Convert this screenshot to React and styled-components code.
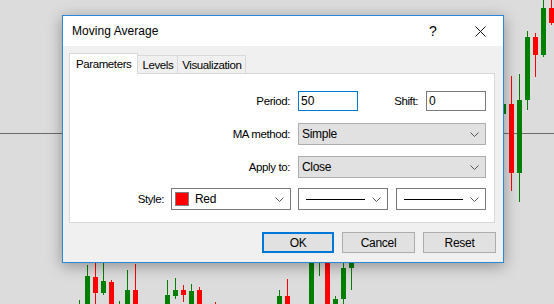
import React from 'react'
import styled, { createGlobalStyle } from 'styled-components'

const GREEN = '#008000'
const RED = '#ff0000'

// x = left edge of body, bt/bb body top/bottom, wt/wb wick top/bottom
const candles = [
  { x: 501, bt: 104, bb: 114, wt: 104, wb: 114, c: GREEN },
  { x: 509, bt: 104, bb: 173, wt: 76, wb: 191, c: RED },
  { x: 517, bt: 100, bb: 173, wt: 74, wb: 202, c: GREEN },
  { x: 525, bt: 37, bb: 100, wt: 31, wb: 110, c: GREEN },
  { x: 533, bt: 37, bb: 55, wt: 33, wb: 77, c: RED },
  { x: 541, bt: 8, bb: 55, wt: 0, wb: 57, c: GREEN },
  { x: 549, bt: 8, bb: 23, wt: 0, wb: 25, c: RED },
  { x: 77, bt: 306, bb: 310, wt: 300, wb: 310, c: GREEN },
  { x: 85, bt: 276, bb: 304, wt: 265, wb: 304, c: GREEN },
  { x: 93, bt: 277, bb: 293, wt: 262, wb: 304, c: RED },
  { x: 101, bt: 281, bb: 293, wt: 262, wb: 295, c: GREEN },
  { x: 109, bt: 282, bb: 304, wt: 280, wb: 304, c: RED },
  { x: 117, bt: 306, bb: 310, wt: 301, wb: 310, c: GREEN },
  { x: 125, bt: 290, bb: 304, wt: 270, wb: 304, c: GREEN },
  { x: 133, bt: 290, bb: 304, wt: 264, wb: 304, c: RED },
  { x: 165, bt: 295, bb: 304, wt: 280, wb: 304, c: GREEN },
  { x: 173, bt: 290, bb: 296, wt: 278, wb: 299, c: GREEN },
  { x: 181, bt: 290, bb: 295, wt: 285, wb: 302, c: RED },
  { x: 189, bt: 291, bb: 304, wt: 284, wb: 304, c: GREEN },
  { x: 197, bt: 290, bb: 304, wt: 287, wb: 304, c: RED },
  { x: 213, bt: 306, bb: 310, wt: 302, wb: 310, c: RED },
  { x: 277, bt: 296, bb: 304, wt: 290, wb: 304, c: GREEN },
  { x: 285, bt: 296, bb: 304, wt: 279, wb: 304, c: RED },
  { x: 309, bt: 240, bb: 304, wt: 240, wb: 304, c: GREEN },
  { x: 317, bt: 240, bb: 250, wt: 240, wb: 276, c: GREEN },
  { x: 325, bt: 240, bb: 304, wt: 240, wb: 304, c: RED },
  { x: 333, bt: 299, bb: 304, wt: 296, wb: 304, c: GREEN },
  { x: 341, bt: 268, bb: 299, wt: 250, wb: 304, c: GREEN },
  { x: 349, bt: 250, bb: 268, wt: 250, wb: 290, c: GREEN },
]

const GlobalStyle = createGlobalStyle`
  html, body {
    margin: 0;
    padding: 0;
    background: #dcdcdc;
  }
  body {
    font-family: "Liberation Sans", Arial, sans-serif;
    color: #000;
  }
`

const Desktop = styled.div`
  position: relative;
  width: 554px;
  height: 304px;
  overflow: hidden;
  background: #dcdcdc;
`

const ChartSvg = styled.svg`
  display: block;
`

const Window = styled.div`
  position: absolute;
  left: 62px;
  top: 15px;
  width: 442px;
  height: 248px;
  box-sizing: border-box;
  border: 1px solid #2b88d8;
  background: #f0f0f0;
  box-shadow: 0 3px 14px rgba(0, 0, 0, 0.35);
  display: flex;
  flex-direction: column;
`

const TitleBar = styled.div`
  height: 30px;
  background: #fff;
  display: flex;
  align-items: center;
  padding-left: 9px;
`

const Title = styled.div`
  flex: 1;
  font-size: 12px;
  letter-spacing: 0.05px;
`

const HelpGlyph = styled.div`
  width: 46px;
  text-align: center;
  font-size: 14px;
  margin-right: 1px;
`

const CloseBox = styled.div`
  width: 46px;
  height: 30px;
  display: flex;
  align-items: center;
  justify-content: center;
`

const Body = styled.div`
  flex: 1;
  display: flex;
  flex-direction: column;
  padding: 7px 8px 0 6px;
`

const TabBar = styled.div`
  height: 20px;
  display: flex;
  align-items: flex-end;
`

const Tab = styled.div`
  box-sizing: border-box;
  height: ${(p) => (p.$active ? '21px' : '18px')};
  margin-bottom: ${(p) => (p.$active ? '-1px' : '0')};
  margin-left: ${(p) => (p.$first ? '0' : '-1px')};
  padding: 0 ${(p) => (p.$active ? '6px' : '4px')};
  border: 1px solid #d9d9d9;
  border-bottom: none;
  background: ${(p) => (p.$active ? '#fff' : '#f0f0f0')};
  position: relative;
  z-index: ${(p) => (p.$active ? 2 : 1)};
  display: flex;
  align-items: center;
  font-size: 11.5px;
  letter-spacing: -0.4px;
`

const Panel = styled.div`
  box-sizing: border-box;
  height: 150px;
  background: #fff;
  border: 1px solid #d9d9d9;
  padding: 17px 8px 0 0;
  display: flex;
  flex-direction: column;
`

const Row = styled.div`
  display: flex;
  align-items: center;
  justify-content: flex-end;
  margin-top: ${(p) => p.$top || 0}px;
`

const Label = styled.div`
  font-size: 11.5px;
  letter-spacing: -0.4px;
  text-align: right;
  width: ${(p) => (p.$w ? `${p.$w}px` : 'auto')};
  margin-right: ${(p) => p.$gap || 8}px;
`

const TextInput = styled.input`
  box-sizing: border-box;
  width: 60px;
  height: 20px;
  margin: 0;
  padding: 0 2px;
  border: 1px solid ${(p) => (p.$focused ? '#0078d7' : '#7a7a7a')};
  outline: none;
  background: #fff;
  font-family: "Liberation Sans", Arial, sans-serif;
  font-size: 12px;
  color: #000;
`

const Combo = styled.div`
  box-sizing: border-box;
  width: ${(p) => p.$w}px;
  height: 22px;
  margin-left: ${(p) => p.$ml || 0}px;
  border: 1px solid ${(p) => (p.$flat ? '#adadad' : '#7a7a7a')};
  background: ${(p) => (p.$flat ? '#e1e1e1' : '#fff')};
  display: flex;
  align-items: center;
  padding: 0 6px 0 3px;
  font-size: 12px;
  letter-spacing: -0.3px;
`

const ComboText = styled.div`
  flex: 1;
  display: flex;
  align-items: center;
`

const Swatch = styled.div`
  box-sizing: border-box;
  width: 14px;
  height: 14px;
  background: ${RED};
  border: 1px solid #808080;
  margin-right: 6px;
`

const LineSample = styled.div`
  width: 59px;
  height: 1px;
  background: #000;
  margin-left: 4px;
`

const ButtonRow = styled.div`
  display: flex;
  justify-content: flex-end;
  gap: 8px;
  margin-top: 9px;
  margin-right: -1px;
`

const Button = styled.div`
  box-sizing: border-box;
  width: ${(p) => (p.$default ? 72 : 73)}px;
  height: 21px;
  border: ${(p) => (p.$default ? '2px solid #0078d7' : '1px solid #adadad')};
  background: #e1e1e1;
  display: flex;
  align-items: center;
  justify-content: center;
  font-size: 12px;
  letter-spacing: -0.3px;
`

const Chevron = () => (
  <svg width="9" height="5" viewBox="0 0 9 5">
    <path d="M0.5 0.5 L4.5 4.5 L8.5 0.5" fill="none" stroke="#555" strokeWidth="1" />
  </svg>
)

const CloseIcon = () => (
  <svg width="11" height="11" viewBox="0 0 11 11">
    <path d="M0.5 0.5 L10.5 10.5 M10.5 0.5 L0.5 10.5" stroke="#111" strokeWidth="1" />
  </svg>
)

const Chart = () => (
  <ChartSvg width="554" height="304" viewBox="0 0 554 304">
    <rect width="554" height="304" fill="#dcdcdc" />
    <line x1="0" y1="133.5" x2="554" y2="133.5" stroke="#6b6b6b" strokeWidth="1" />
    {candles.map((k, i) => (
      <g key={i}>
        <rect x={k.x + 2} y={k.wt} width="1" height={k.wb - k.wt} fill={k.c} />
        <rect x={k.x} y={k.bt} width="5" height={k.bb - k.bt} fill={k.c} />
      </g>
    ))}
  </ChartSvg>
)

const App = () => {
  return (
    <Desktop>
      <GlobalStyle />
      <Chart />
      <Window>
        <TitleBar>
          <Title>Moving Average</Title>
          <HelpGlyph>?</HelpGlyph>
          <CloseBox>
            <CloseIcon />
          </CloseBox>
        </TitleBar>
        <Body>
          <TabBar>
            <Tab $active $first>Parameters</Tab>
            <Tab>Levels</Tab>
            <Tab>Visualization</Tab>
          </TabBar>
          <Panel>
            <Row>
              <Label>Period:</Label>
              <TextInput $focused readOnly defaultValue="50" />
              <Label $w={60}>Shift:</Label>
              <TextInput readOnly defaultValue="0" />
            </Row>
            <Row $top={12}>
              <Label>MA method:</Label>
              <Combo $w={188} $flat>
                <ComboText>Simple</ComboText>
                <Chevron />
              </Combo>
            </Row>
            <Row $top={11}>
              <Label>Apply to:</Label>
              <Combo $w={188} $flat>
                <ComboText>Close</ComboText>
                <Chevron />
              </Combo>
            </Row>
            <Row $top={10}>
              <Label $gap={7}>Style:</Label>
              <Combo $w={120}>
                <ComboText>
                  <Swatch />
                  Red
                </ComboText>
                <Chevron />
              </Combo>
              <Combo $w={90} $ml={7}>
                <ComboText>
                  <LineSample />
                </ComboText>
                <Chevron />
              </Combo>
              <Combo $w={90} $ml={8}>
                <ComboText>
                  <LineSample />
                </ComboText>
                <Chevron />
              </Combo>
            </Row>
          </Panel>
          <ButtonRow>
            <Button $default>OK</Button>
            <Button>Cancel</Button>
            <Button>Reset</Button>
          </ButtonRow>
        </Body>
      </Window>
    </Desktop>
  )
}

export default App
